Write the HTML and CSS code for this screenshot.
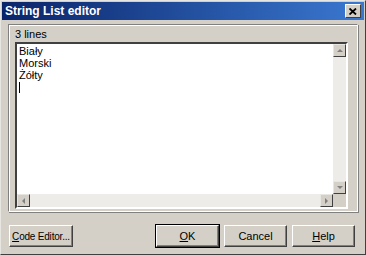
FILE: index.html
```html
<!DOCTYPE html>
<html lang="pl">
<head>
  <meta charset="UTF-8" />
  <title>String List editor</title>
  <link rel="stylesheet" href="styles.css">
</head>
<body>
<div class="window">
  <div class="titlebar">
    <span class="title">String List editor</span>
    <span class="close">
      <svg width="8" height="7" viewBox="0 0 8 7"><path d="M0.5 0.5 L7 6.5 M7 0.5 L0.5 6.5" stroke="#000" stroke-width="1.8"/></svg>
    </span>
  </div>
  <div class="client">
    <div class="group">
      <div class="group-label">3 lines</div>
      <div class="memo">
        <div class="memo-text">
          <div>Biały</div>
          <div>Morski</div>
          <div>Żółty</div>
          <div><span class="caret"></span></div>
        </div>
        <div class="vscroll">
          <div class="sbtn"><span class="arr up"></span></div>
          <div class="track"></div>
          <div class="sbtn"><span class="arr down"></span></div>
        </div>
        <div class="hscroll">
          <div class="sbtn"><span class="arr left"></span></div>
          <div class="track"></div>
          <div class="sbtn"><span class="arr right"></span></div>
        </div>
        <div class="corner"></div>
      </div>
    </div>
    <div class="buttons">
      <button class="btn"><u>C</u>ode Editor...</button>
      <div class="spacer"></div>
      <button class="btn default"><u>O</u>K</button>
      <button class="btn">Cancel</button>
      <button class="btn"><u>H</u>elp</button>
    </div>
  </div>
</div>
</body>
</html>
```
FILE: styles.css
```css
body { margin: 0; background: #d4d0c8; font-family: "Liberation Sans", Arial, sans-serif; font-size: 11px; color: #000; }
.window {
  width: 366px; height: 255px; box-sizing: border-box;
  border: 1px solid; border-color: #e8e6e0 #404040 #404040 #e8e6e0;
  padding: 1px;
  background: #d4d0c8;
}
.titlebar {
  height: 18px;
  display: flex; align-items: center; justify-content: space-between;
  background: linear-gradient(to right, #0a246a, #3a78d0);
  color: #fff; font-weight: bold; font-size: 12px;
  padding: 0 2px 0 3px;
}
.close {
  width: 14px; height: 12px;
  background: #d4d0c8;
  border: 1px solid; border-color: #fff #404040 #404040 #fff;
  margin-right: 1px;
  display: flex; align-items: center; justify-content: center;
}
.client { padding: 4px 6px 0 6px; }
.group {
  border: 1px solid; border-color: #808080 #fff #fff #808080;
  box-shadow: inset 1px 1px #fff, 1px 1px #808080;
  height: 188px; box-sizing: border-box;
  padding: 3px 9px 6px 6px;
}
.group-label { height: 14px; line-height: 12px; }
.memo {
  display: grid;
  grid-template-columns: 1fr 13px;
  grid-template-rows: 1fr 13px;
  height: 163px;
  border: 2px solid; border-color: #404040 #fff #fff #404040;
  background: #fff;
}
.memo-text { padding: 1px 2px; line-height: 12px; }
.caret { display: inline-block; width: 1px; height: 11px; background: #000; vertical-align: -2px; }
.vscroll { display: flex; flex-direction: column; background: #eeece8; }
.hscroll { display: flex; background: #eeece8; }
.track { flex: 1; }
.sbtn {
  width: 13px; height: 13px; box-sizing: border-box;
  background: #d4d0c8;
  border: 1px solid; border-color: #e8e6e0 #404040 #404040 #e8e6e0;
  display: flex; align-items: center; justify-content: center;
}
.arr { width: 0; height: 0; border: 3px solid transparent; }
.arr.up { border-bottom-color: #808080; border-top: 0; }
.arr.down { border-top-color: #808080; border-bottom: 0; }
.arr.left { border-right-color: #808080; border-left: 0; }
.arr.right { border-left-color: #808080; border-right: 0; }
.corner { background: #d4d0c8; }
.buttons { display: flex; gap: 5px; margin-top: 13px; padding: 0 3px 0 1px; }
.spacer { flex: 1; }
.btn {
  width: 63px; height: 22px; padding: 0;
  font: 11px "Liberation Sans", Arial, sans-serif; color: #000;
  white-space: nowrap;
  background: #d4d0c8;
  border: 1px solid; border-color: #fff #404040 #404040 #fff;
  box-shadow: inset -1px -1px #808080;
}
.btn.default { outline: 1px solid #000; }
.buttons .btn:first-child { width: 64px; font-size: 10px; letter-spacing: -0.2px; }
```
